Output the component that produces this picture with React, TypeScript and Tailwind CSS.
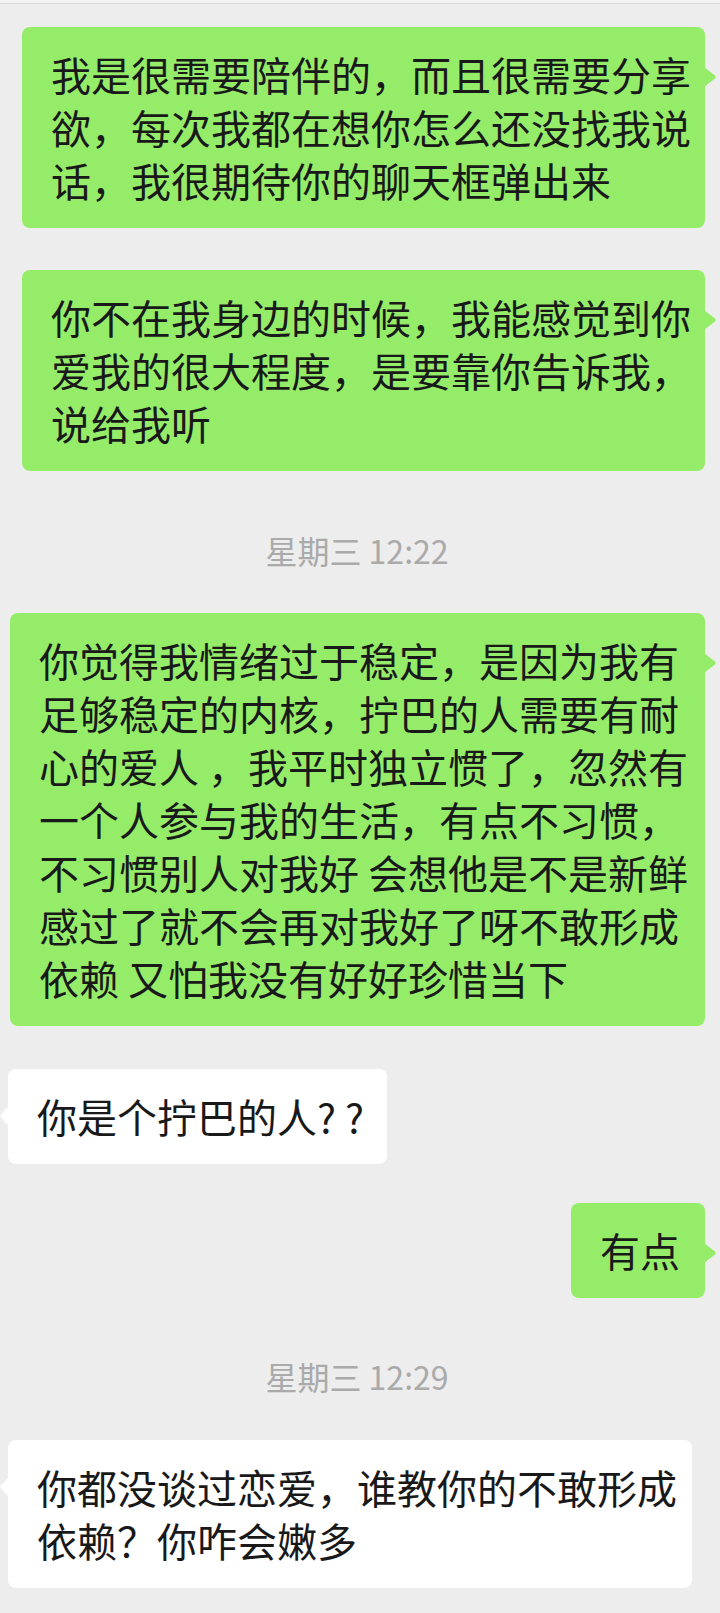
const font = { fontFamily: '"Noto Sans CJK SC", "Noto Sans", sans-serif' };

type BubbleProps = {
  mine: boolean;
  lines: React.ReactNode[];
  width: string;
  className?: string;
};

function Tail({ mine }: { mine: boolean }) {
  if (mine) {
    return (
      <svg className="absolute top-[40px] right-[-12px]" width="13" height="20" viewBox="0 0 13 20">
        <path d="M0 0 L11 8.6 Q12.6 10 11 11.4 L0 20 Z" fill="#95ec69" />
      </svg>
    );
  }
  return (
    <svg className="absolute top-[37px] left-[-8px]" width="9" height="20" viewBox="0 0 9 20">
      <path d="M9 0 L1 8.6 Q-0.4 10 1 11.4 L9 20 Z" fill="#ffffff" />
    </svg>
  );
}

function Bubble({ mine, lines, width, className }: BubbleProps) {
  return (
    <div className={`flex ${mine ? 'justify-end pr-[15px]' : 'justify-start pl-[8px]'} ${className ?? ''}`}>
      <div
        className={`relative rounded-[8px] pl-[29px] py-[21px] text-[40px] leading-[53px] text-[#191919] ${width} ${
          mine ? 'bg-[#95ec69]' : 'bg-white'
        }`}
      >
        <Tail mine={mine} />
        {lines.map((line, idx) => (
          <div key={idx} className="whitespace-nowrap">
            {line}
          </div>
        ))}
      </div>
    </div>
  );
}

function TimeStamp({ text, className }: { text: string; className?: string }) {
  return (
    <div className={`flex justify-center pr-[6px] text-[32px] leading-[40px] text-[#aaaaaa] ${className ?? ''}`}>
      {text}
    </div>
  );
}

export default function App() {
  return (
    <div className="w-[720px] h-[1613px] bg-[#ededed] overflow-hidden" style={font}>
      <div className="h-[4px] bg-[#f2f2f2] border-b border-[#dadada]" />
      <div className="flex flex-col pt-[23px]">
        <Bubble
          mine
          width="w-[683px]"
          lines={['我是很需要陪伴的，而且很需要分享', '欲，每次我都在想你怎么还没找我说', '话，我很期待你的聊天框弹出来']}
        />
        <Bubble
          mine
          width="w-[683px]"
          className="mt-[42px]"
          lines={['你不在我身边的时候，我能感觉到你', '爱我的很大程度，是要靠你告诉我，', '说给我听']}
        />

        <TimeStamp text="星期三 12:22" className="mt-[59px]" />

        <Bubble
          mine
          width="w-[695px]"
          className="mt-[43px]"
          lines={[
            '你觉得我情绪过于稳定，是因为我有',
            '足够稳定的内核，拧巴的人需要有耐',
            '心的爱人 ，我平时独立惯了，忽然有',
            '一个人参与我的生活，有点不习惯，',
            '不习惯别人对我好 会想他是不是新鲜',
            '感过了就不会再对我好了呀不敢形成',
            '依赖 又怕我没有好好珍惜当下',
          ]}
        />

        <Bubble
          mine={false}
          width="w-[379px]"
          className="mt-[43px]"
          lines={[
            <>
              你是个拧巴的人<span className="tracking-[9px]">??</span>
            </>,
          ]}
        />

        <Bubble mine width="w-[134px]" className="mt-[39px]" lines={['有点']} />

        <TimeStamp text="星期三 12:29" className="mt-[58px]" />

        <Bubble
          mine={false}
          width="w-[684px]"
          className="mt-[44px]"
          lines={['你都没谈过恋爱，谁教你的不敢形成', '依赖？你咋会嫩多']}
        />
      </div>
    </div>
  );
}
